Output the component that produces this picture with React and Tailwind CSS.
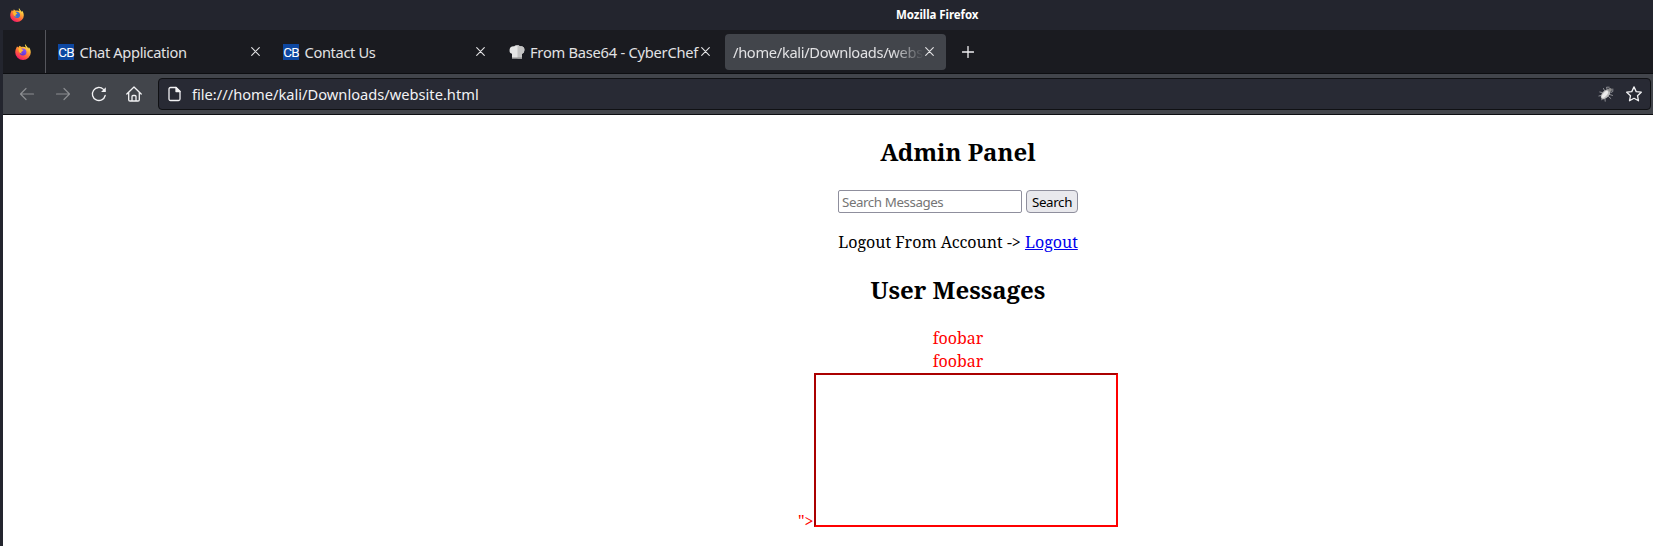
function FirefoxLogo({ id, className }) {
  return (
    <svg className={className} viewBox="0 0 32 32" aria-hidden="true">
      <defs>
        <linearGradient id={`${id}-body`} x1="0.85" y1="0.1" x2="0.3" y2="1">
          <stop offset="0" stopColor="#fff44f" />
          <stop offset="0.35" stopColor="#ffa436" />
          <stop offset="0.65" stopColor="#ff5f3d" />
          <stop offset="1" stopColor="#f5156c" />
        </linearGradient>
        <linearGradient id={`${id}-globe`} x1="0.8" y1="0" x2="0.3" y2="1">
          <stop offset="0" stopColor="#9059ff" />
          <stop offset="1" stopColor="#5b2fd0" />
        </linearGradient>
      </defs>
      <path
        fill={`url(#${id}-body)`}
        d="M20.500 0c-1 3 0 5 2 7-3-1-6-2-9-1L9 3.500C7.500 4.500 7.500 6 7.500 7L4 5C2 9 .5 12 .5 17a15.500 15 0 0 0 31 0c0-5-2-9-4-10.500L26.500 9C25 5 22 3.500 20.500 0z"
      />
      <path
        fill={id === "title" ? "#3b6fd4" : `url(#${id}-globe)`}
        d="M14 9c5-1 9 2 9 7.500 0 4-3 6.500-7 6.500-4.500 0-7-3-6.500-6.500 2 0 4.500 0 5.500-2-1.500-1.500-3-2-4.500-2.500C11.500 10.500 12.500 9.500 14 9z"
      />
      <path fill="#ffbd2e" d="M7 8c3-1 5 .5 6.500 2.500L17 12c-1 2-3 2-4.500 3-1 2 1 4 3 4-4 1-8-2-8-6z" />
    </svg>
  );
}

function Close() {
  return (
    <svg className="size-[9px] shrink-0" viewBox="0 0 9 9" fill="none" stroke="#e4e4e6" strokeWidth="1.1" strokeLinecap="round">
      <path d="M.7.7l7.600 7.600M8.300.7L.7 8.300" />
    </svg>
  );
}

function CbIcon() {
  return (
    <span className="flex size-4 shrink-0 items-center justify-center bg-[#0d47a1] font-[Roboto,sans-serif] text-[13.5px] leading-4 tracking-[-0.9px] text-white">
      CB
    </span>
  );
}

function ChefHat() {
  return (
    <svg className="size-4 shrink-0" viewBox="0 0 16 16">
      <path fill="#e6e6e6" d="M3 14.500V9.700C1 9.500.3 8 .6 5.500 1 3.300 3 2 5 2.400 6 .8 10 .7 11 2.400c2.500-.5 4.500 1 4.400 3.300-.1 2.300-.9 3.800-2.400 4v4.800z" />
      <path fill="#c4c4c4" d="M8.500 1.200c1 0 2 .4 2.500 1.200 2.500-.5 4.500 1 4.400 3.300-.1 2.300-.9 3.800-2.400 4v4.800H8.500z" />
      <path fill="#8a8a8a" d="M3 13.500h10v1H3z" />
    </svg>
  );
}

function Bug() {
  return (
    <svg className="size-4" viewBox="0 0 16 16">
      <g stroke="#8e8f94" strokeWidth="1" fill="none" strokeLinecap="round">
        <path d="M4 6.500L1.800 6M3 9.500L.9 10M5 12.500L3.500 13.700M6.500 4.500L5.500 2.500M10.500 10.500l2.300 2M7 13.200l.2 2M11.500 8.500l3 .9M9 3L8.500 1.200h2.700M13 6.500l1.800-1V3" />
      </g>
      <ellipse cx="7.600" cy="8.200" rx="6" ry="3.500" transform="rotate(-48 7.600 8.200)" fill="#b9b9b9" />
      <ellipse cx="6.900" cy="8.400" rx="4.300" ry="1.900" transform="rotate(-48 6.900 8.400)" fill="#ececec" />
      <circle cx="12" cy="3.800" r="1.900" fill="#8f8f8f" />
    </svg>
  );
}

function TitleBar() {
  return (
    <header className="flex h-[30px] items-center bg-[#23252e] pl-[10px]">
      <FirefoxLogo id="title" className="size-[14px]" />
      <span className="ml-[872px] text-[11.5px] font-bold tracking-[-0.06px] text-white">Mozilla Firefox</span>
    </header>
  );
}

function TabBar() {
  return (
    <nav className="flex h-11 items-center border-b border-[#0d0e11] bg-[#1a1b20] text-[14.667px] leading-5 text-[#e2e2e4]">
      <div className="flex h-full w-[43px] items-center border-r border-[#55565c] pl-3">
        <FirefoxLogo id="tab" className="size-4" />
      </div>
      <div className="flex w-[225px] items-center pl-3">
        <CbIcon />
        <span className="ml-[5.500px] w-[171.500px] whitespace-nowrap pt-px tracking-[-0.36px]">Chat Application</span>
        <Close />
      </div>
      <div className="flex w-[225px] items-center pl-3">
        <CbIcon />
        <span className="ml-[5.500px] w-[171.500px] whitespace-nowrap pt-px tracking-[-0.36px]">Contact Us</span>
        <Close />
      </div>
      <div className="flex w-[229px] items-center pl-[13px]">
        <ChefHat />
        <span className="ml-[5px] w-[171px] whitespace-nowrap pt-px tracking-[-0.24px]">From Base64 - CyberChef</span>
        <Close />
      </div>
      <div className="flex h-9 w-[221px] items-center rounded-[4px] bg-[#42454b] pl-2">
        <span className="mr-px w-[191px] overflow-hidden whitespace-nowrap pt-px tracking-[-0.32px] [mask-image:linear-gradient(to_left,transparent,black_32px)]">
          /home/kali/Downloads/website.html
        </span>
        <Close />
      </div>
      <svg className="ml-4 size-3" viewBox="0 0 12 12" fill="none" stroke="#f0f0f2" strokeWidth="1.3" strokeLinecap="round">
        <path d="M6 .5v11M.5 6h11" />
      </svg>
    </nav>
  );
}

function ToolBar() {
  return (
    <div className="flex h-[41px] items-center border-b border-[#0d0e11] bg-[#42454b] pr-[2px] text-[#f2f2f4]">
      <svg className="ml-4 size-4 text-[#8b8d91]" viewBox="0 0 16 16" fill="none" stroke="currentColor" strokeWidth="1.2" strokeLinecap="round" strokeLinejoin="round">
        <path d="M14.500 8H1.500M7 2.500L1.500 8 7 13.500" />
      </svg>
      <svg className="ml-5 size-4 text-[#8b8d91]" viewBox="0 0 16 16" fill="none" stroke="currentColor" strokeWidth="1.2" strokeLinecap="round" strokeLinejoin="round">
        <path d="M1.500 8h13M9 2.500L14.500 8 9 13.500" />
      </svg>
      <svg className="ml-5 size-4" viewBox="0 0 16 16" fill="none" stroke="currentColor" strokeWidth="1.3" strokeLinecap="round">
        <path d="M14.200 9.500A6.500 6.500 0 1 1 12.500 3.400" />
        <path d="M14.800 1.200v4.700h-4.700z" fill="currentColor" stroke="none" />
      </svg>
      <svg className="ml-[19px] size-4" viewBox="0 0 16 16" fill="none" stroke="currentColor" strokeWidth="1.3" strokeLinecap="round" strokeLinejoin="round">
        <path d="M.8 8L8 1l7.200 7M2.700 6.500v7.200c0 .8.500 1.300 1.300 1.300h8c.8 0 1.300-.5 1.300-1.300V6.500M6 15v-4.500c0-.6.400-1 1-1h2c.6 0 1 .4 1 1V15" />
      </svg>
      <div className="ml-4 flex h-8 flex-1 items-center rounded-[4px] border border-[#101114] bg-[#282a34] pl-2 pr-2">
        <svg className="size-4" viewBox="0 0 16 16" fill="none" stroke="currentColor" strokeWidth="1.3" strokeLinejoin="round">
          <path d="M3.500 1.500h5.500l4 4v7.500a1.500 1.500 0 0 1-1.500 1.500h-8A1.500 1.500 0 0 1 2 13V3a1.500 1.500 0 0 1 1.500-1.500z" />
          <path d="M9 1.500v4h4z" fill="currentColor" />
        </svg>
        <span className="ml-[9px] flex-1 text-[14.667px] leading-5">file:///home/kali/Downloads/website.html</span>
        <Bug />
        <svg className="ml-3 size-4" viewBox="0 0 16 16" fill="none" stroke="currentColor" strokeWidth="1.3" strokeLinejoin="round">
          <path d="M8 .9l2.200 4.700 5.100.6-3.800 3.500 1 5.100L8 12.300l-4.500 2.500 1-5.100L.7 6.200l5.100-.6z" />
        </svg>
      </div>
    </div>
  );
}

function AdminPage() {
  return (
    <main className="flex w-[1910px] flex-1 flex-col items-center bg-white pt-5 font-['Noto_Serif',serif] text-[16px] leading-[23px] text-black">
      <h2 className="text-[24px] font-bold leading-[33px]">Admin Panel</h2>
      <form className="mt-[22px] flex h-[23px] gap-1 font-['Noto_Sans',sans-serif] text-[13.333px]" onSubmit={(e) => e.preventDefault()}>
        <input
          className="w-[184px] rounded-[2px] border border-[#8f8f9d] bg-white px-[3px] pt-[2px] tracking-[-0.42px] placeholder:text-[#757575]"
          placeholder="Search Messages"
        />
        <button className="w-[52px] rounded-[4px] border border-[#8f8f9d] bg-[#e9e9ed] pt-px leading-[21px] tracking-[-0.36px]">Search</button>
      </form>
      <p className="mt-[18px]">
        Logout From Account -&gt; <a className="text-[#0000ee] underline" href="#">Logout</a>
      </p>
      <h2 className="mt-[19px] text-[24px] font-bold leading-[33px]">User Messages</h2>
      <div className="mt-[21px] flex flex-col items-center text-[#ff0000]">
        <p>foobar</p>
        <p>foobar</p>
        <div className="flex items-end">
          <span className="-mb-[6px] w-[16px] text-[16px]">"&gt;</span>
          <div className="h-[154px] w-[304px] border-2 border-b-[#ff0000] border-l-[#aa0000] border-r-[#ff0000] border-t-[#aa0000]" />
        </div>
      </div>
    </main>
  );
}

export default function App() {
  return (
    <div className="flex h-[546px] w-[1653px] flex-col overflow-hidden bg-[#23252e] font-['Noto_Sans',sans-serif]">
      <TitleBar />
      <div className="ml-[3px] flex min-h-0 flex-1 flex-col overflow-hidden">
        <TabBar />
        <ToolBar />
        <AdminPage />
      </div>
    </div>
  );
}
